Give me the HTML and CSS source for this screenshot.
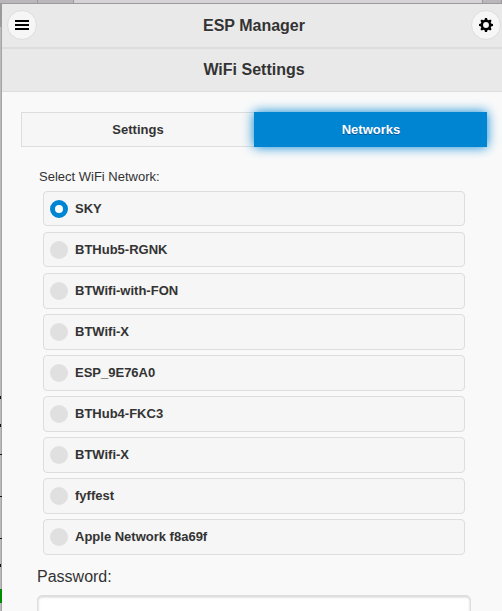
FILE: index.html
```html
<!DOCTYPE html>
<html lang="en">
<head>
<meta charset="utf-8">
<title>ESP Manager</title>
<link rel="stylesheet" href="styles.css">
</head>
<body>
<div class="strip"><i class="tab-a"></i><i class="tab-b"></i><i class="tab-c"></i><i class="tab-d"></i></div>
<div class="window">
  <div class="edge"></div>
  <div class="page">
    <header class="bar">
      <button class="round" aria-label="Menu"><svg width="14" height="14" viewBox="0 0 14 14"><path d="M0 2h14v2H0zM0 6h14v2H0zM0 10h14v2H0z"/></svg></button>
      <h1>ESP Manager</h1>
      <button class="round" aria-label="Options"><svg width="14" height="14" viewBox="0 0 14 14"><circle cx="7" cy="7" r="4.2" fill="none" stroke="#000" stroke-width="2.5"/><path d="M6 0h2l.6 2.5H5.400zM6 14h2l.6-2.500H5.400zM0 6v2l2.500.6V5.400zM14 6v2l-2.500.6V5.400zM1.400 2.800l1.400-1.400 2 1.200-2.200 2.200zM12.600 2.800l-1.400-1.400-2 1.200 2.200 2.200zM1.400 11.200l1.400 1.400 2-1.200-2.200-2.200zM12.600 11.200l-1.400 1.400-2-1.200 2.200-2.200z"/></svg></button>
    </header>
    <div class="bar sub"><h2>WiFi Settings</h2></div>
    <main>
      <nav class="tabs"><a class="tab">Settings</a><a class="tab active">Networks</a></nav>
      <div class="legend">Select WiFi Network:</div>
      <div class="list">
        <label class="row short"><i class="radio on"></i><span>SKY</span></label>
        <label class="row short"><i class="radio"></i><span>BTHub5-RGNK</span></label>
        <label class="row"><i class="radio"></i><span>BTWifi-with-FON</span></label>
        <label class="row"><i class="radio"></i><span>BTWifi-X</span></label>
        <label class="row"><i class="radio"></i><span>ESP_9E76A0</span></label>
        <label class="row"><i class="radio"></i><span>BTHub4-FKC3</span></label>
        <label class="row"><i class="radio"></i><span>BTWifi-X</span></label>
        <label class="row"><i class="radio"></i><span>fyffest</span></label>
        <label class="row"><i class="radio"></i><span>Apple Network f8a69f</span></label>
      </div>
      <div class="password">Password:</div>
      <div class="input"></div>
    </main>
  </div>
</div>
</body>
</html>
```
FILE: styles.css
```css
* { box-sizing: border-box; }
body {
  margin: 0;
  height: 611px;
  overflow: hidden;
  display: flex;
  flex-direction: column;
  background: #f9f9f9;
  color: #333;
  font-family: "Liberation Sans", Arial, sans-serif;
}
.strip {
  flex: none;
  display: flex;
  height: 4px;
  border-bottom: 1px solid #9c9a9d;
  background: #d5d3d6;
}
.strip i { background: #b9b7ba; border-right: 1px solid #9c9a9d; }
.tab-a { width: 38px; }
.tab-b { width: 36px; }
.strip .tab-c { width: 409px; background: #d5d3d6; }
.tab-d { flex: 1; }
.window { display: flex; flex: 1; }
.edge {
  width: 2px;
  background:
    linear-gradient(#9a999b, #9a999b) 0 0 / 2px 23px,
    linear-gradient(#111, #111) 0 392px / 1px 3px,
    linear-gradient(#111, #111) 0 420px / 1px 3px,
    linear-gradient(#111, #111) 0 450px / 2px 1px,
    linear-gradient(#111, #111) 0 492px / 2px 1px,
    linear-gradient(#111, #111) 0 534px / 2px 1px,
    linear-gradient(#111, #111) 0 560px / 1px 3px,
    linear-gradient(#008c00, #008c00) 0 585px / 2px 14px,
    linear-gradient(90deg, #bbb 1px, #a3a3a3 1px);
  background-repeat: no-repeat;
}
.page { width: 500px; height: 607px; overflow: hidden; }
.bar {
  display: flex;
  align-items: flex-start;
  justify-content: space-between;
  height: 45px;
  padding: 6px 1px 0 5px;
  background: #e9e9e9;
  border-bottom: 2px solid #ddd;
}
.sub { height: 43px; justify-content: center; padding: 11px 0 0 4px; border-bottom-width: 1px; }
h1, h2 { margin: 0; font-size: 16px; line-height: 20px; text-align: center; white-space: nowrap; text-shadow: 0 1px 0 #eee; }
h1 { padding-top: 6px; }
.round {
  display: flex;
  align-items: center;
  justify-content: center;
  width: 30px;
  height: 30px;
  padding: 0;
  border: 1px solid #ddd;
  border-radius: 50%;
  background: #f6f6f6;
}
main { padding: 20px 31px 0 19px; }
.tabs { display: flex; width: 466px; height: 35px; font-size: 13px; font-weight: bold; }
.tab {
  width: 233px;
  line-height: 34px;
  text-align: center;
  border: 1px solid #ddd;
  border-right: 0;
  background: #f6f6f6;
}
.active {
  border-color: #0085d3;
  background: #0085d3;
  color: #fff;
  text-shadow: 0 1px 0 #005599;
  box-shadow: 0 0 12px #0085d3;
}
.legend { height: 44px; padding: 21px 0 0 18px; font-size: 13px; line-height: 17px; }
.list { display: flex; flex-direction: column; gap: 5px; width: 422px; margin-left: 22px; }
.row {
  display: flex;
  align-items: flex-start;
  height: 36px;
  padding: 8px 0 0 6px;
  border: 1px solid #ddd;
  border-radius: 4px;
  background: #f6f6f6;
  font-size: 13px;
  font-weight: bold;
  line-height: 18px;
}
.short { height: 35px; margin-bottom: 1px; }
.row span { margin-left: 7px; text-shadow: 0 1px 0 #f3f3f3; }
.radio { width: 18px; height: 18px; border-radius: 50%; background: #e0e0e0; }
.on { border: 5px solid #0085d3; background: #fff; }
.password { height: 40px; padding: 12px 0 0 16px; font-size: 16px; line-height: 20px; }
.input {
  width: 434px;
  height: 40px;
  margin-left: 16px;
  border: 1px solid #ddd;
  border-radius: 5px;
  background: #fff;
  box-shadow: inset 0 1px 3px rgba(0, 0, 0, .2);
}
```
